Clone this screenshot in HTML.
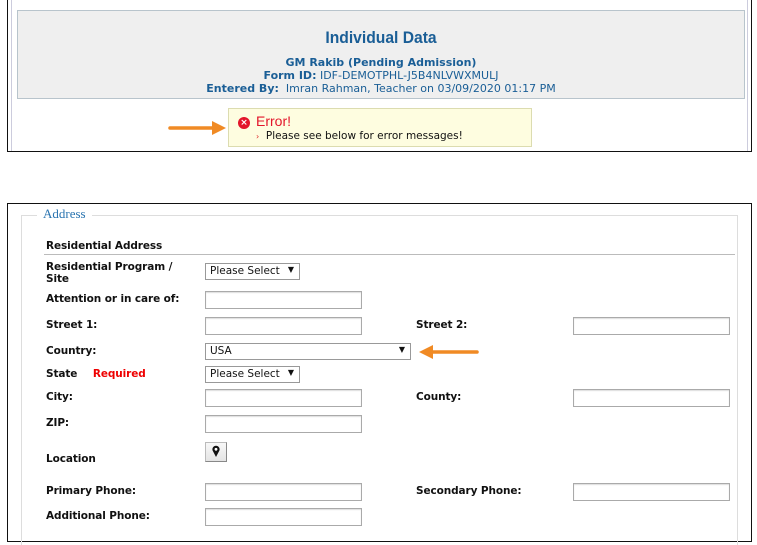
<!DOCTYPE html>
<html><head><meta charset="utf-8"><style>
*{margin:0;padding:0;box-sizing:border-box}
body{width:757px;height:545px;background:#fff;position:relative;overflow:hidden;font-family:"DejaVu Sans","Liberation Sans",sans-serif}
.a{position:absolute}
.lb{position:absolute;font-size:10.5px;font-weight:bold;color:#111;letter-spacing:-0.1px}
.in{position:absolute;width:157px;height:18px;border:1px solid #aaa;background:#fff;box-shadow:inset 0 1px 1px #ddd}
.sel{position:absolute;height:17px;border:1px solid #999;background:#fff;font-size:10.5px;color:#111;padding:1px 0 0 4px;font-family:"DejaVu Sans",sans-serif}
.sel i{position:absolute;right:5px;top:1px;font-style:normal;font-size:8px}
</style></head><body>
<div class="a" style="left:7px;top:-2px;width:745px;height:154px;border:1px solid #111;border-top:none"></div>
<div class="a" style="left:11px;top:0;width:737px;height:151px;border-left:1px solid #ccd;border-right:1px solid #ccd"></div>
<div class="a" style="left:17px;top:10px;width:728px;height:89px;background:#efefef;border:1px solid #b8c4cc"></div>
<div class="a" style="left:17px;top:28px;width:728px;text-align:center;color:#1a5e96;font-size:17px;font-weight:bold;font-family:'Liberation Sans',sans-serif;transform:scaleX(0.92)">Individual Data</div>
<div class="a" style="left:17px;top:56px;width:728px;text-align:center;color:#1a5e96;font-size:11px;line-height:13px">
<b>GM Rakib (Pending Admission)</b><br><b>Form ID:</b> IDF-DEMOTPHL-J5B4NLVWXMULJ<br><b>Entered By:</b>&nbsp; Imran Rahman, Teacher on 03/09/2020 01:17 PM</div>
<div class="a" style="left:228px;top:108px;width:304px;height:39px;background:#fefde0;border:1px solid #dcdcb0"></div>
<div class="a" style="left:238px;top:117px;width:12px;height:12px;border-radius:50%;background:#e3162b;color:#fff;font-size:9px;line-height:12px;text-align:center;font-weight:bold">×</div>
<div class="a" style="left:256px;top:113px;color:#e3162b;font-size:14px;font-family:'Liberation Sans',sans-serif">Error!</div>
<div class="a" style="left:256px;top:130px;font-size:10.5px;color:#111"><span style="color:#d22;font-size:8px">›</span>&nbsp; Please see below for error messages!</div>
<svg class="a" style="left:168px;top:120px" width="60" height="16"><line x1="2" y1="8" x2="46" y2="8" stroke="#f08a24" stroke-width="3.5" stroke-linecap="round"/><polygon points="44,1 58,8 44,15" fill="#f08a24"/></svg>

<div class="a" style="left:7px;top:203px;width:745px;height:339px;border:1px solid #111"></div>
<div class="a" style="left:21px;top:215px;width:717px;height:330px;border-left:1px solid #ddd;border-top:1px solid #ddd;border-right:1px solid #ddd"></div>
<div class="a" style="left:37px;top:206px;background:#fff;padding:0 6px;color:#2a74b0;font-size:13px;font-family:'Liberation Serif',serif">Address</div>
<div class="lb" style="left:46px;top:240px">Residential Address</div>
<div class="a" style="left:44px;top:254px;width:691px;height:1px;background:#bbb"></div>
<div class="lb" style="left:46px;top:261px;line-height:12px">Residential Program /<br>Site</div>
<div class="lb" style="left:46px;top:293px">Attention or in care of:</div>
<div class="lb" style="left:46px;top:319px">Street 1:</div>
<div class="lb" style="left:46px;top:345px">Country:</div>
<div class="lb" style="left:46px;top:368px">State <span style="color:#e00;margin-left:12px">Required</span></div>
<div class="lb" style="left:46px;top:391px">City:</div>
<div class="lb" style="left:46px;top:417px">ZIP:</div>
<div class="lb" style="left:46px;top:453px">Location</div>
<div class="lb" style="left:46px;top:485px">Primary Phone:</div>
<div class="lb" style="left:46px;top:510px">Additional Phone:</div>
<div class="lb" style="left:416px;top:319px">Street 2:</div>
<div class="lb" style="left:416px;top:391px">County:</div>
<div class="lb" style="left:416px;top:485px">Secondary Phone:</div>

<div class="sel" style="left:205px;top:263px;width:95px">Please Select<i>▼</i></div>
<div class="sel" style="left:205px;top:343px;width:206px">USA<i>▼</i></div>
<div class="sel" style="left:205px;top:366px;width:95px">Please Select<i>▼</i></div>
<div class="in" style="left:205px;top:291px"></div>
<div class="in" style="left:205px;top:317px"></div>
<div class="in" style="left:205px;top:389px"></div>
<div class="in" style="left:205px;top:415px"></div>
<div class="in" style="left:205px;top:483px"></div>
<div class="in" style="left:205px;top:508px"></div>
<div class="in" style="left:573px;top:317px"></div>
<div class="in" style="left:573px;top:389px"></div>
<div class="in" style="left:573px;top:483px"></div>
<div class="a" style="left:205px;top:442px;width:22px;height:20px;border:1px solid #bbb;border-right-color:#888;border-bottom-color:#888;background:linear-gradient(#f8f8f8,#e4e4e4)"></div>
<svg class="a" style="left:211px;top:445px" width="10" height="13"><path d="M5 12 L1.6 5.5 A3.6 3.6 0 1 1 8.4 5.5 Z" fill="#111"/><circle cx="5" cy="4.3" r="1.4" fill="#fff"/></svg>
<svg class="a" style="left:418px;top:344px" width="64" height="16"><polygon points="1,8 15,1 15,15" fill="#f08a24"/><line x1="13" y1="8" x2="59" y2="8" stroke="#f08a24" stroke-width="3.5" stroke-linecap="round"/></svg>
</body></html>
